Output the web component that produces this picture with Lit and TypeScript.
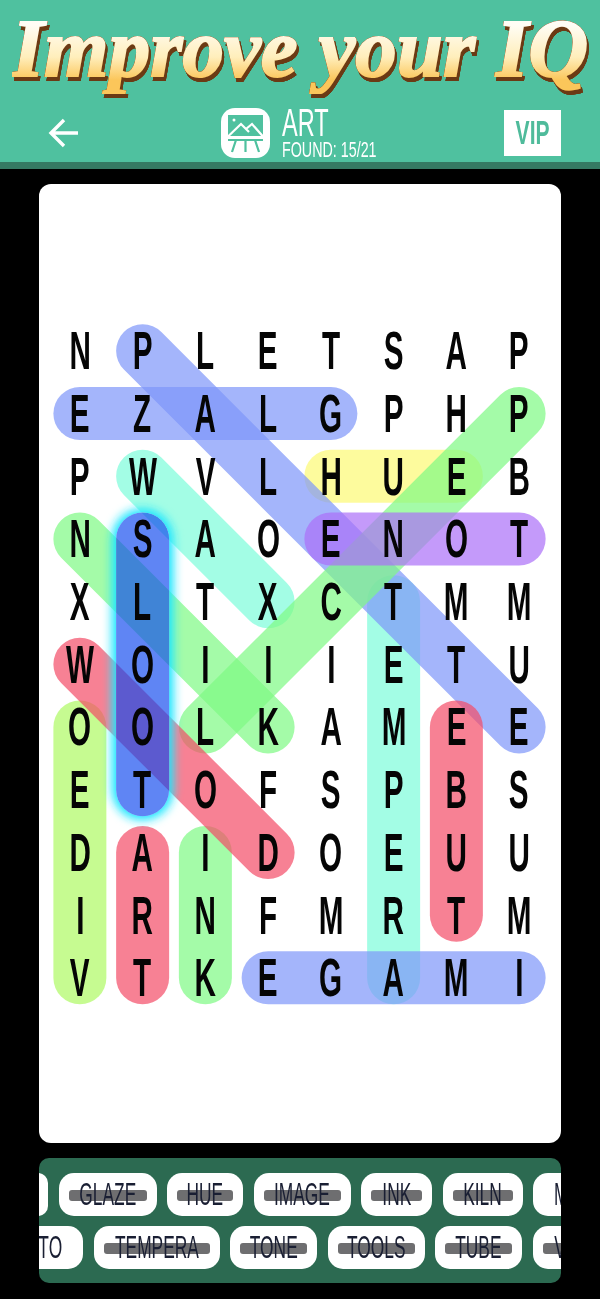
import { LitElement, html, css, svg } from 'lit';
import { customElement } from 'lit/decorators.js';

const ROWS = [
  'NPLETSAP', 'EZALGPHP', 'PWVLHUEB', 'NSAOENOT', 'XLTXCTMM', 'WOIIIETU',
  'OOLKAMEE', 'ETOFSPBS', 'DAIDOEUU', 'IRNFMRTM', 'VTKEGAMI',
];

const CELL_W = 62.75;
const CELL_H = 62.7;
const PAD_X = 9.5;
const PAD_Y = 135.5;

const BLUE = 'rgba(126,149,249,.7)';
const MINT = 'rgba(124,252,218,.7)';
const GREEN = 'rgba(126,249,131,.7)';
const LIME = 'rgba(174,249,99,.7)';
const RED = 'rgba(244,76,102,.7)';
const YELLOW = 'rgba(252,249,116,.7)';
const PURPLE = 'rgba(171,111,248,.7)';

// col/row of both ends of every found word, painted in this order
const WORDS: [number, number, number, number, string][] = [
  [5, 4, 5, 10, MINT],
  [1, 2, 3, 4, MINT],
  [4, 2, 6, 2, YELLOW],
  [1, 0, 7, 6, BLUE],
  [0, 1, 4, 1, BLUE],
  [3, 10, 7, 10, BLUE],
  [0, 3, 3, 6, GREEN],
  [7, 1, 2, 6, GREEN],
  [4, 3, 7, 3, PURPLE],
  [0, 6, 0, 10, LIME],
  [1, 8, 1, 10, RED],
  [2, 8, 2, 10, GREEN],
  [0, 5, 3, 8, RED],
  [6, 6, 6, 9, RED],
];

type Chip = { text: string; width: number; found?: boolean; start?: boolean };

const CHIPS_TOP: Chip[] = [
  { text: '', width: 20 },
  { text: 'GLAZE', width: 98, found: true },
  { text: 'HUE', width: 76, found: true },
  { text: 'IMAGE', width: 97, found: true },
  { text: 'INK', width: 71, found: true },
  { text: 'KILN', width: 80, found: true },
  { text: 'M', width: 60, start: true },
];
const CHIPS_BOTTOM: Chip[] = [
  { text: 'TO', width: 66 },
  { text: 'TEMPERA', width: 126, found: true },
  { text: 'TONE', width: 87, found: true },
  { text: 'TOOLS', width: 97, found: true },
  { text: 'TUBE', width: 87, found: true },
  { text: 'VIDEO', width: 98, found: true },
];

const cx = (c: number) => PAD_X + CELL_W * (c + 0.5);
const cy = (r: number) => PAD_Y + CELL_H * (r + 0.5);

const wordLines = (clip?: string) =>
  WORDS.map(
    ([c1, r1, c2, r2, col]) => svg`<line x1=${cx(c1)} y1=${cy(r1)} x2=${cx(c2)} y2=${cy(r2)}
      stroke=${col} stroke-width="53" stroke-linecap="round" clip-path=${clip ?? 'none'} />`,
  );

@customElement('app-root')
export class AppRoot extends LitElement {
  static styles = css`
    :host {
      display: block;
      width: 600px;
      height: 1299px;
      background: #000;
      font-family: 'Liberation Sans Narrow', 'Liberation Sans', sans-serif;
      overflow: hidden;
    }

    .header {
      background: #4fc19f;
      border-bottom: 7px solid #357a63;
      height: 162px;
    }

    .promo {
      height: 104px;
      display: flex;
      align-items: center;
      justify-content: center;
    }

    .promo-text {
      font-family: 'Liberation Serif', serif;
      font-style: italic;
      font-weight: 700;
      font-size: 83px;
      line-height: 92px;
      margin-bottom: 8px;
      white-space: nowrap;
      background: linear-gradient(#fffdf5 25%, #ffeebb 60%, #fbc65a 85%);
      -webkit-background-clip: text;
      background-clip: text;
      color: transparent;
      -webkit-text-stroke: 2px transparent;
      filter: drop-shadow(0 0 0.6px #8a4f1c) drop-shadow(0 0 0.6px #8a4f1c) drop-shadow(2px 4px 0 #6b3a14);
    }

    .bar {
      height: 58px;
      display: flex;
      align-items: center;
      justify-content: space-between;
      padding: 0 39px 0 47px;
    }

    .back {
      width: 32px;
      height: 32px;
      display: block;
    }

    .title {
      display: flex;
      align-items: center;
      gap: 12px;
      margin-left: 14px;
    }

    .art-icon {
      width: 49px;
      height: 50px;
      display: block;
    }

    .title-text {
      color: #fff;
      width: 95px;
    }

    .title-name {
      font-size: 38px;
      line-height: 34px;
      transform: scaleX(0.62);
      transform-origin: left;
    }

    .title-found {
      font-size: 22px;
      line-height: 20px;
      white-space: nowrap;
      transform: scaleX(0.65);
      transform-origin: left;
    }

    .vip {
      width: 57px;
      height: 46px;
      background: #fff;
      color: #4fbb9b;
      font-weight: 700;
      font-size: 33px;
      display: flex;
      align-items: center;
      justify-content: center;
    }

    .vip span {
      transform: scaleX(0.64);
    }

    .board {
      position: relative;
      box-sizing: border-box;
      margin: 15px 39px 0;
      height: 959px;
      background: #fff;
      border-radius: 12px;
      padding: ${PAD_Y}px ${PAD_X}px;
    }

    .marks {
      position: absolute;
      inset: 0;
      width: 100%;
      height: 100%;
    }

    .grid {
      position: relative;
      display: grid;
      grid-template-columns: repeat(8, ${CELL_W}px);
      grid-auto-rows: ${CELL_H}px;
    }

    .cell {
      display: flex;
      align-items: center;
      justify-content: center;
      font-size: 53px;
      font-weight: 700;
      color: #050505;
    }

    .cell span {
      transform: scaleX(0.56);
    }

    .tray {
      box-sizing: border-box;
      margin: 15px 39px 0;
      height: 125px;
      background: #2c6a51;
      border-radius: 10px;
      padding: 15px 0;
      display: flex;
      flex-direction: column;
      gap: 10px;
      overflow: hidden;
    }

    .chips {
      display: flex;
      gap: 10.5px;
    }

    .chips.top {
      margin-left: -11px;
    }

    .chips.bottom {
      margin-left: -22px;
    }

    .chip {
      position: relative;
      flex: none;
      height: 43px;
      box-sizing: border-box;
      background: #fff;
      border-radius: 15px;
      display: flex;
      align-items: center;
      justify-content: center;
      color: #1a1f33;
      font-size: 31px;
    }

    .chip.start {
      justify-content: flex-start;
      padding-left: 21px;
    }

    .chip span {
      position: relative;
      transform: scaleX(0.56);
    }

    .chip.start span {
      transform-origin: left;
    }

    .strike {
      position: absolute;
      left: 10px;
      right: 10px;
      top: 17px;
      height: 10.5px;
      border-radius: 3px;
      background: #6e6e70;
    }
  `;

  private renderChips(items: Chip[], cls: string) {
    return html`<div class="chips ${cls}">
      ${items.map(
        (c) => html`<div class="chip ${c.start ? 'start' : ''}" style="width:${c.width}px">
          ${c.found ? html`<div class="strike"></div>` : ''}
          <span>${c.text}</span>
        </div>`,
      )}
    </div>`;
  }

  render() {
    const top = cy(3) - 26.5;
    const height = cy(7) - cy(3) + 53;
    return html`
      <div class="header">
        <div class="promo"><div class="promo-text">Improve your IQ</div></div>
        <div class="bar">
          <svg class="back" viewBox="0 0 32 32" fill="none" stroke="#fff" stroke-width="3.4">
            <path d="M31 16H4M17 3 4 16l13 13" />
          </svg>
          <div class="title">
            <svg class="art-icon" viewBox="0 0 49 50">
              <rect width="49" height="50" rx="14" fill="#fff" />
              <rect x="7" y="7" width="35" height="23" fill="#4fc19f" />
              <circle cx="13" cy="12" r="1.5" fill="#fff" />
              <path d="M7 28.5 20 16l8 8M25 21l6-5 11 12.5M7 29h35" fill="none" stroke="#fff" stroke-width="2.2" />
              <path d="M7 32h35M15 32l-4 12M24.500 32v12M34 32l4 12" fill="none" stroke="#4fc19f" stroke-width="2.2" />
            </svg>
            <div class="title-text">
              <div class="title-name">ART</div>
              <div class="title-found">FOUND: 15/21</div>
            </div>
          </div>
          <div class="vip"><span>VIP</span></div>
        </div>
      </div>

      <div class="board">
        <svg class="marks" viewBox="0 0 522 959">
          <defs>
            <filter id="glow" x="-60%" y="-20%" width="220%" height="140%">
              <feGaussianBlur stdDeviation="5" />
            </filter>
            <clipPath id="active">
              <rect x=${cx(1) - 26.5} y=${top} width="53" height=${height} rx="26.5" />
            </clipPath>
          </defs>
          ${wordLines()}
          <rect x=${cx(1) - 31} y=${top - 4} width="62" height=${height + 8} rx="31" fill="#1fe6ff"
            filter="url(#glow)" />
          <!-- the glow lies over the other words, but not inside the selected bar -->
          <rect x=${cx(1) - 26.5} y=${top} width="53" height=${height} rx="26.5" fill="#fff" />
          ${wordLines('url(#active)')}
          <rect x=${cx(1) - 26.5} y=${top} width="53" height=${height} rx="26.5"
            fill="rgba(12,70,239,.66)" />
        </svg>
        <div class="grid">
          ${ROWS.map((row) =>
            [...row].map((ch) => html`<div class="cell"><span>${ch}</span></div>`),
          )}
        </div>
      </div>

      <div class="tray">
        ${this.renderChips(CHIPS_TOP, 'top')} ${this.renderChips(CHIPS_BOTTOM, 'bottom')}
      </div>
    `;
  }
}
